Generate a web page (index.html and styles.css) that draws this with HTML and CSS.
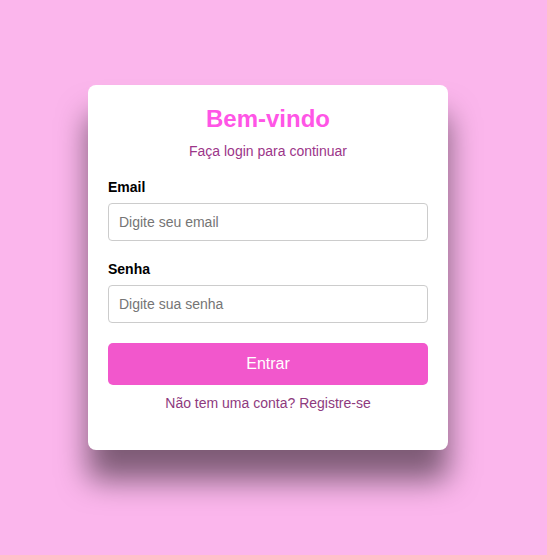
FILE: index.html
```html
<!DOCTYPE html>
<html lang="pt-BR">
<head>
<meta charset="utf-8">
<title>Login</title>
<link rel="stylesheet" href="styles.css">
</head>
<body>
<main class="page">
  <form class="card">
    <h1 class="title">Bem-vindo</h1>
    <p class="subtitle">Faça login para continuar</p>
    <div class="field">
      <label class="label" for="email">Email</label>
      <input class="input" id="email" type="email" placeholder="Digite seu email">
    </div>
    <div class="field">
      <label class="label" for="senha">Senha</label>
      <input class="input" id="senha" type="password" placeholder="Digite sua senha">
    </div>
    <button class="button" type="button">Entrar</button>
    <p class="footer">Não tem uma conta? Registre-se</p>
  </form>
</main>
</body>
</html>
```
FILE: styles.css
```css
html, body {
  margin: 0;
  padding: 0;
}
body {
  background: #fbb6ec;
  font-family: "Liberation Sans", Arial, sans-serif;
  width: 547px;
  height: 555px;
  overflow: hidden;
}
.page {
  padding: 85px 0 0 88px;
}
.card {
  box-sizing: border-box;
  width: 360px;
  height: 365px;
  background: #fff;
  border-radius: 8px;
  padding: 20px;
  box-shadow: 0 30px 30px rgba(0, 0, 0, 0.5);
  display: flex;
  flex-direction: column;
}
.title {
  margin: 0;
  font-size: 24px;
  font-weight: bold;
  color: #ff55e6;
  text-align: center;
  line-height: 28px;
}
.subtitle {
  margin: 10px 0 20px;
  font-size: 14px;
  line-height: 16px;
  color: #9c3589;
  text-align: center;
}
.field {
  display: flex;
  flex-direction: column;
  margin-bottom: 20px;
}
.label {
  font-size: 14px;
  line-height: 16px;
  font-weight: bold;
  color: #000;
  margin-bottom: 8px;
}
.input {
  box-sizing: border-box;
  height: 38px;
  padding: 10px;
  border: 1px solid #ccc;
  border-radius: 4px;
  font-family: inherit;
  font-size: 14px;
  outline: none;
}
.input::placeholder {
  color: #757575;
}
.button {
  height: 42px;
  border: none;
  border-radius: 5px;
  background: #f257cc;
  color: #fff;
  font-family: inherit;
  font-size: 16px;
  cursor: pointer;
}
.footer {
  margin: 10px 0 0;
  font-size: 14px;
  line-height: 16px;
  color: #8e3a7e;
  text-align: center;
}
```
